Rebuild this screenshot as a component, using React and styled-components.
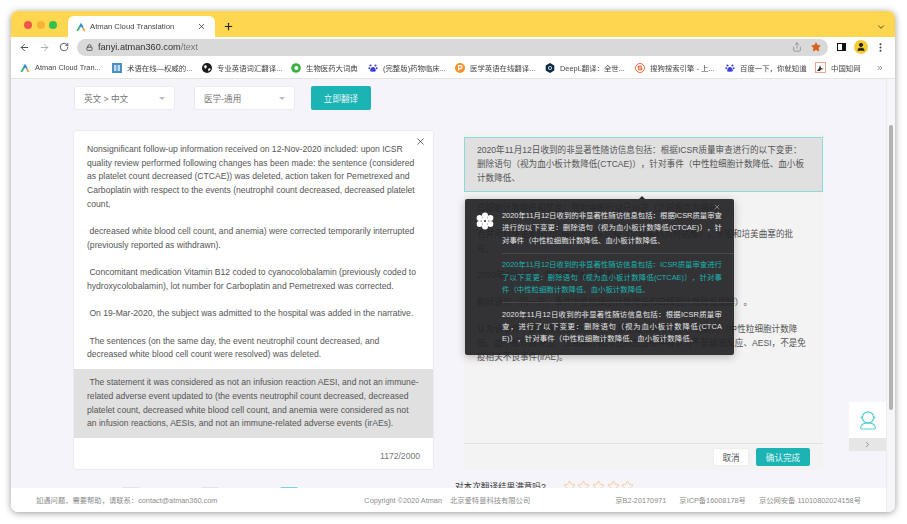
import React from "react";
import styled, { createGlobalStyle } from "styled-components";
import {
  ArrowLeft,
  ArrowRight,
  ChevronDown,
  ChevronRight,
  ChevronsRight,
  Lock,
  MoreVertical,
  Plus,
  RotateCw,
  Share,
  Star,
  User,
  X,
} from "lucide-react";

const sans = `"Liberation Sans", "Noto Sans CJK SC", sans-serif`;
const teal = "#1bb3b3";

const AtmanLogo = ({ size = 10 }) => (
  <svg width={size} height={size} viewBox="0 0 12 12" fill="none" strokeWidth="2.2" strokeLinecap="round">
    <path d="M2 10 L5 5" stroke="#3bb56c" />
    <path d="M5 5 L6 3 L8 6" stroke="#2f8fd8" />
    <path d="M8.6 8 L10 10" stroke="#f0a13a" />
  </svg>
);

const Paw = () => (
  <svg width="10" height="10" viewBox="0 0 12 12" fill="#3d3dd8">
    <circle cx="3" cy="3" r="1.3" />
    <circle cx="9" cy="3" r="1.3" />
    <circle cx="1.6" cy="6.4" r="1.2" />
    <circle cx="10.4" cy="6.4" r="1.2" />
    <path d="M6 4.8c2 0 3.4 2.6 3.4 4.2 0 1.6-2 1.6-3.4 1.2-1.4.4-3.4.4-3.4-1.2 0-1.6 1.4-4.2 3.4-4.2z" />
  </svg>
);

const BookmarkIcon = ({ kind }) => {
  if (kind === "atman") return <AtmanLogo />;
  if (kind === "paw") return <Paw />;
  if (kind === "term")
    return (
      <svg width="10" height="10" viewBox="0 0 10 10">
        <rect width="10" height="10" fill="#4a90c4" />
        <path d="M2 2h2.4v6H2zM5.6 2H8v6H5.6z" fill="#bcdcf0" />
      </svg>
    );
  if (kind === "globe")
    return (
      <svg width="10" height="10" viewBox="0 0 10 10">
        <circle cx="5" cy="5" r="5" fill="#1b1b1b" />
        <path d="M2 3l2-1 1 2-2 2zM6 6l2-1 .6 1.6L6.6 8.6z" fill="#fff" />
      </svg>
    );
  if (kind === "bio")
    return (
      <svg width="10" height="10" viewBox="0 0 10 10">
        <circle cx="5" cy="5" r="4.8" fill="#3cb043" />
        <circle cx="5.4" cy="5" r="2" fill="#fff" />
      </svg>
    );
  if (kind === "p")
    return (
      <svg width="10" height="10" viewBox="0 0 10 10">
        <circle cx="5" cy="5" r="5" fill="#f0932b" />
        <path d="M3.6 7.6V2.6h2a1.5 1.5 0 0 1 0 3H3.6" fill="none" stroke="#fff" strokeWidth="1.1" />
      </svg>
    );
  if (kind === "deepl")
    return (
      <svg width="10" height="10" viewBox="0 0 10 10">
        <path d="M5 0l4.3 2.5v5L5 10 .7 7.5v-5z" fill="#0f2b46" />
        <circle cx="5" cy="5" r="1.6" fill="none" stroke="#fff" strokeWidth=".8" />
      </svg>
    );
  if (kind === "sogou")
    return (
      <svg width="10" height="10" viewBox="0 0 10 10" fill="none" stroke="#ee5a2a">
        <circle cx="5" cy="5" r="4.5" strokeWidth=".9" />
        <path d="M7 3.2H3.4v1.8h3.2v1.8H3" strokeWidth="1.1" />
      </svg>
    );
  return (
    <svg width="11" height="11" viewBox="0 0 11 11">
      <rect x=".5" y=".5" width="10" height="10" fill="#fff" stroke="#e8a48c" />
      <path d="M2 9l2-3 1-3 1 3 3 1-3 .6L5 9z" fill="#333" />
    </svg>
  );
};

const bookmarks = [
  { kind: "atman", label: "Atman Cloud Tran...", width: 92 },
  { kind: "term", label: "术语在线—权威的...", width: 90 },
  { kind: "globe", label: "专业英语词汇翻译...", width: 89 },
  { kind: "bio", label: "生物医药大词典", width: 77 },
  { kind: "paw", label: "(完整版)药物临床...", width: 87 },
  { kind: "p", label: "医学英语在线翻译...", width: 90 },
  { kind: "deepl", label: "DeepL翻译：全世...", width: 90 },
  { kind: "sogou", label: "搜狗搜索引擎 - 上...", width: 90 },
  { kind: "paw", label: "百度一下，你就知道", width: 90 },
  { kind: "cnki", label: "中国知网", width: 60 },
];

const sourceParagraphs = [
  "Nonsignificant follow-up information received on 12-Nov-2020 included: upon ICSR quality review performed following changes has been made: the sentence (considered as platelet count decreased (CTCAE)) was deleted, action taken for Pemetrexed and Carboplatin with respect to the events (neutrophil count decreased, decreased platelet count,",
  " decreased white blood cell count, and anemia) were corrected temporarily interrupted (previously reported as withdrawn).",
  " Concomitant medication Vitamin B12 coded to cyanocolobalamin (previously coded to hydroxycolobalamin), lot number for Carboplatin and Pemetrexed was corrected.",
  " On 19-Mar-2020, the subject was admitted to the hospital was added in the narrative.",
  " The sentences (on the same day, the event neutrophil count decreased, and decreased white blood cell count were resolved) was deleted.",
];

const targetParagraphs = [
  "白细胞计数降低和贫血）暂时中断行动已纠正（之前报告为撤药）。",
  "合并用药维生素B12的编码改为氰钴胺（之前编码为羟钴胺），卡铂和培美曲塞的批号。",
  "2020年3月19日，叙述中增加了患者入院。",
  "删除语句（同一天，事件中性粒细胞计数降低和白细胞计数降低缓解）。",
  "认为该事件不是输液反应AESI，也不是免疫相关不良事件更新为（中性粒细胞计数降低、血小板计数降低、白细胞计数降低和贫血事件被认为不是输液反应、AESI，不是免疫相关不良事件(irAE)。",
];

const suggestions = [
  {
    text: "2020年11月12日收到的非显著性随访信息包括：根据ICSR质量审查进行的以下变更：删除语句（视为血小板计数降低(CTCAE)），针对事件（中性粒细胞计数降低、血小板计数降低、",
  },
  {
    text: "2020年11月12日收到的非显著性随访信息包括：ICSR质量审查进行了以下变更：删除语句（视为血小板计数降低(CTCAE)），针对事件（中性粒细胞计数降低、血小板计数降低、",
    active: true,
  },
  {
    text: "2020年11月12日收到的非显著性随访信息包括：根据ICSR质量审查，进行了以下变更：删除语句（视为血小板计数降低(CTCAE)），针对事件（中性粒细胞计数降低、血小板计数降低、",
    spacing: 0.12,
  },
];

const App = () => {
  return (
    <Page>
      <GlobalStyle />
      <Window>
        <TitleBar>
          <Lights>
            <Light color="#f0544c" />
            <Light color="#f5b433" />
            <Light color="#35c04a" />
          </Lights>
          <Tab>
            <AtmanLogo />
            <TabTitle>Atman Cloud Translation</TabTitle>
            <X size={9} strokeWidth={2} color="#333" />
          </Tab>
          <NewTab>
            <Plus size={11} strokeWidth={2.6} color="#222" />
          </NewTab>
          <TabMenu>
            <ChevronDown size={10} strokeWidth={2} color="#333" />
          </TabMenu>
        </TitleBar>
        <Toolbar>
          <NavIcons>
            <ArrowLeft size={11} strokeWidth={2} color="#444" />
            <ArrowRight size={11} strokeWidth={2} color="#aaa" />
            <RotateCw size={10} strokeWidth={2} color="#444" />
          </NavIcons>
          <Address>
            <Lock size={7} strokeWidth={3} color="#555" />
            <Url>
              fanyi.atman360.com<span>/text</span>
            </Url>
            <AddressActions>
              <Share size={10} strokeWidth={1.5} color="#777" />
              <Star size={10} fill="#d9601a" color="#d9601a" />
            </AddressActions>
          </Address>
          <SidePanelIcon />
          <Avatar>
            <User size={10} fill="#222" color="#222" />
          </Avatar>
          <MoreVertical size={11} strokeWidth={2.4} color="#444" />
        </Toolbar>
        <Bookmarks>
          {bookmarks.map((b) => (
            <Bookmark key={b.label} $width={b.width}>
              <BookmarkIcon kind={b.kind} />
              <span>{b.label}</span>
            </Bookmark>
          ))}
          <MoreBookmarks>
            <ChevronsRight size={8} color="#555" />
          </MoreBookmarks>
        </Bookmarks>
        <Viewport>
          <Main>
            <Content>
              <Controls>
                <Select>
                  英文 &gt; 中文
                  <Caret />
                </Select>
                <Select>
                  医学-通用
                  <Caret />
                </Select>
                <TranslateButton>立即翻译</TranslateButton>
              </Controls>
              <Panels>
                <SourcePanel>
                  <CloseSource>
                    <X size={11} strokeWidth={1.6} color="#333" />
                  </CloseSource>
                  <SourceBody>
                    {sourceParagraphs.map((p) => (
                      <SourceText key={p}>{p}</SourceText>
                    ))}
                    <Highlight>
                      {" "}
                      The statement it was considered as not an infusion reaction AESI, and not an immune-related adverse event updated to (the events neutrophil count decreased, decreased platelet count, decreased white blood cell count, and anemia were considered as not an infusion reactions, AESIs, and not an immune-related adverse events (irAEs).
                    </Highlight>
                  </SourceBody>
                  <Counter>1172/2000</Counter>
                </SourcePanel>
                <TargetPanel>
                  <TargetBody>
                    <ActiveSentence>
                      2020年11月12日收到的非显著性随访信息包括：根据ICSR质量审查进行的以下变更：删除语句（视为血小板计数降低(CTCAE)），针对事件（中性粒细胞计数降低、血小板计数降低、
                    </ActiveSentence>
                    <TargetParagraphs>
                      {targetParagraphs.map((p) => (
                        <TargetText key={p}>{p}</TargetText>
                      ))}
                    </TargetParagraphs>
                  </TargetBody>
                  <TargetActions>
                    <CancelButton>取消</CancelButton>
                    <ConfirmButton>确认完成</ConfirmButton>
                  </TargetActions>
                  <Popover>
                    <PopoverClose>
                      <X size={8} strokeWidth={1.5} color="#ccc" />
                    </PopoverClose>
                    <PopoverIcon>
                      <svg width="18" height="18" viewBox="0 0 18 18" fill="#fff">
                        <circle cx="9" cy="3.4" r="3" />
                        <circle cx="9" cy="14.6" r="3" />
                        <circle cx="3.6" cy="6" r="3" />
                        <circle cx="14.4" cy="6" r="3" />
                        <circle cx="3.6" cy="12" r="3" />
                        <circle cx="14.4" cy="12" r="3" />
                        <circle cx="9" cy="9" r="3.4" />
                        <circle cx="9" cy="9" r="1" fill="#28292c" />
                      </svg>
                    </PopoverIcon>
                    <SuggestionList>
                      {suggestions.map((s) => (
                        <Suggestion key={s.text} $active={s.active} $spacing={s.spacing}>
                          {s.text}
                        </Suggestion>
                      ))}
                    </SuggestionList>
                  </Popover>
                </TargetPanel>
              </Panels>
              <RatingRow>
                <LeftTools>
                  <ToolButton />
                  <ToolButton />
                  <ToolButton $primary />
                </LeftTools>
                <Rating>
                  <RatingLabel>对本次翻译结果满意吗?</RatingLabel>
                  <Stars>
                    {[1, 2, 3, 4, 5].map((n) => (
                      <Star key={n} size={13} strokeWidth={1.2} color="#f3bd6a" />
                    ))}
                  </Stars>
                </Rating>
              </RatingRow>
              <SideWidget>
                <SideWidgetTop>
                  <svg width="18" height="20" viewBox="0 0 18 20" fill="none" stroke="#55cfcf" strokeWidth="1.2">
                    <circle cx="9" cy="7.5" r="5.6" />
                    <path d="M3 19c-1.4 0-1.4-1-1.2-2 .5-2.6 3-4 7.2-4s6.700 1.400 7.200 4c.2 1 .2 2-1.200 2z" />
                    <path d="M1.800 7.500h1.200M15 7.500h1.200" strokeWidth="2.200" />
                  </svg>
                </SideWidgetTop>
                <SideWidgetToggle>
                  <ChevronRight size={9} strokeWidth={1.6} color="#666" />
                </SideWidgetToggle>
              </SideWidget>
            </Content>
            <Footer>
              <span>如遇问题，需要帮助，请联系：contact@atman360.com</span>
              <FooterCopyright>Copyright ©2020 Atman</FooterCopyright>
              <span>北京爱特曼科技有限公司</span>
              <FooterLicence>京B2-20170971</FooterLicence>
              <span>京ICP备16008178号</span>
              <span>京公网安备 11010802024158号</span>
            </Footer>
          </Main>
          <ScrollTrack>
            <ScrollThumb />
          </ScrollTrack>
        </Viewport>
      </Window>
    </Page>
  );
};

const GlobalStyle = createGlobalStyle`
  html, body {
    margin: 0;
    background: #fff;
    overflow: hidden;
  }
`;
const Page = styled.div`
  width: 907px;
  height: 524px;
  padding: 11px;
  box-sizing: border-box;
  font-family: ${sans};
  text-spacing-trim: space-all;
`;
const Window = styled.div`
  width: 884px;
  height: 501px;
  display: flex;
  flex-direction: column;
  border-radius: 7px;
  overflow: hidden;
  box-shadow: 0 1px 7px rgba(0, 0, 0, 0.4);
  filter: blur(0.4px);
`;
const TitleBar = styled.div`
  height: 26px;
  flex: none;
  display: flex;
  align-items: flex-end;
  padding-left: 13px;
  background: #ffd64f;
`;
const Lights = styled.div`
  display: flex;
  gap: 4.5px;
  align-self: flex-start;
  margin-top: 9.5px;
`;
const Light = styled.span`
  width: 8px;
  height: 8px;
  border-radius: 50%;
  background: ${(props) => props.color};
`;
const Tab = styled.div`
  width: 147px;
  height: 21px;
  margin-left: 11px;
  padding: 0 9px 0 8px;
  box-sizing: border-box;
  display: flex;
  align-items: center;
  gap: 4px;
  background: #fff;
  border-radius: 6px 6px 0 0;
`;
const TabTitle = styled.span`
  flex: 1;
  font-size: 7.7px;
  color: #444;
  white-space: nowrap;
`;
const NewTab = styled.div`
  height: 21px;
  margin-left: 8px;
  display: flex;
  align-items: center;
`;
const TabMenu = styled.div`
  height: 21px;
  margin-left: auto;
  margin-right: 9px;
  display: flex;
  align-items: center;
`;
const Toolbar = styled.div`
  height: 20px;
  flex: none;
  display: flex;
  align-items: center;
  padding: 0 9px 0 8px;
  background: #fff;
`;
const NavIcons = styled.div`
  width: 58px;
  display: flex;
  align-items: center;
  gap: 9px;
`;
const Address = styled.div`
  width: 752px;
  height: 17px;
  padding: 0 7px 0 9px;
  box-sizing: border-box;
  display: flex;
  align-items: center;
  gap: 5px;
  background: #d9d9d9;
  border-radius: 9px;
`;
const Url = styled.span`
  font-size: 9.2px;
  color: #333;
  span {
    color: #777;
  }
`;
const AddressActions = styled.div`
  margin-left: auto;
  display: flex;
  align-items: center;
  gap: 9px;
`;
const SidePanelIcon = styled.span`
  width: 9px;
  height: 8px;
  margin-left: 9px;
  box-sizing: border-box;
  border: 1.5px solid #111;
  border-right-width: 4px;
`;
const Avatar = styled.span`
  width: 14px;
  height: 14px;
  margin: 0 7px 0 8px;
  display: flex;
  align-items: center;
  justify-content: center;
  border-radius: 50%;
  background: #f6cc33;
`;
const Bookmarks = styled.div`
  height: 21px;
  flex: none;
  display: flex;
  align-items: center;
  padding-left: 9px;
  background: #fff;
  border-bottom: 1px solid #e4e4e4;
`;
const Bookmark = styled.div`
  width: ${(props) => props.$width}px;
  flex: none;
  display: flex;
  align-items: center;
  gap: 5px;
  font-size: 7.4px;
  color: #444;
  white-space: nowrap;
`;
const MoreBookmarks = styled.div`
  margin-left: auto;
  margin-right: 11px;
  display: flex;
`;
const Viewport = styled.div`
  flex: 1;
  min-height: 0;
  display: flex;
  background: #f4f4fa;
`;
const Main = styled.div`
  flex: 1;
  min-width: 0;
  display: flex;
  flex-direction: column;
`;
const Content = styled.div`
  position: relative;
  flex: 1;
  min-height: 0;
  overflow: hidden;
  padding: 7px 0 0 63px;
`;
const Controls = styled.div`
  display: flex;
  gap: 19px;
`;
const Select = styled.div`
  position: relative;
  width: 101px;
  height: 24px;
  padding-left: 9px;
  box-sizing: border-box;
  display: flex;
  align-items: center;
  background: #fff;
  border: 1px solid #ececf0;
  border-radius: 2px;
  font-size: 8.6px;
  color: #777;
`;
const Caret = styled.span`
  position: absolute;
  right: 9px;
  top: 10px;
  border: 3px solid transparent;
  border-top: 3px solid #bbb;
`;
const TranslateButton = styled.button`
  width: 60px;
  height: 24px;
  margin-left: -3px;
  padding: 0;
  border: none;
  border-radius: 2px;
  background: ${teal};
  color: #e8f8f8;
  font-family: ${sans};
  font-size: 8.6px;
`;
const Panels = styled.div`
  display: flex;
  gap: 31px;
  margin-top: 21px;
`;
const SourcePanel = styled.div`
  position: relative;
  width: 359px;
  height: 338px;
  flex: none;
  display: flex;
  flex-direction: column;
  background: #fff;
  border-radius: 2px;
  box-shadow: 0 0 2px rgba(0, 0, 0, 0.14);
`;
const CloseSource = styled.span`
  position: absolute;
  top: 5px;
  right: 7px;
  display: flex;
`;
const SourceBody = styled.div`
  flex: 1;
  padding-top: 12px;
  font-size: 8.6px;
  line-height: 13.7px;
  color: #555;
`;
const SourceText = styled.p`
  margin: 0 13px 13.7px;
  white-space: pre-wrap;
`;
const Highlight = styled.p`
  margin: -6.7px 0 0;
  padding: 7px 13px;
  background: #e0e0e0;
  white-space: pre-wrap;
`;
const Counter = styled.div`
  height: 31px;
  padding-right: 13px;
  text-align: right;
  font-size: 8.6px;
  line-height: 37px;
  color: #777;
`;
const TargetPanel = styled.div`
  position: relative;
  width: 359px;
  height: 339px;
  flex: none;
  display: flex;
  flex-direction: column;
  background: #f3f3f4;
`;
const TargetBody = styled.div`
  flex: 1;
  min-height: 0;
  overflow: hidden;
  padding-top: 6px;
  font-size: 8.6px;
  line-height: 14.2px;
  color: #555;
`;
const ActiveSentence = styled.div`
  padding: 5px 12px;
  background: #e0e0e0;
  border: 1px solid #8fd9d8;
`;
const TargetParagraphs = styled.div`
  padding: 9px 13px 0;
`;
const TargetText = styled.p`
  margin: 0 0 12.5px;
`;
const TargetActions = styled.div`
  height: 26px;
  flex: none;
  display: flex;
  align-items: center;
  justify-content: flex-end;
  gap: 7px;
  padding-right: 13px;
  border-top: 1px solid #e3e3e3;
`;
const CancelButton = styled.button`
  width: 36px;
  height: 18px;
  padding: 0;
  border: 1px solid #eee;
  border-radius: 2px;
  background: #fff;
  color: #555;
  font-family: ${sans};
  font-size: 8.6px;
`;
const ConfirmButton = styled(CancelButton)`
  width: 54px;
  border: none;
  background: ${teal};
  color: #e8f8f8;
`;
const Popover = styled.div`
  position: absolute;
  left: 1px;
  top: 68px;
  width: 269px;
  height: 156px;
  box-sizing: border-box;
  padding: 11px 0 0 37px;
  background: rgba(35, 36, 39, 0.93);
  border-radius: 2px;
  box-shadow: 0 2px 8px rgba(0, 0, 0, 0.25);
  &::before {
    content: "";
    position: absolute;
    left: 174px;
    top: -6px;
    border: 3px solid transparent;
    border-bottom: 3px solid #28292c;
  }
`;
const PopoverClose = styled.span`
  position: absolute;
  top: 4px;
  right: 13px;
  display: flex;
`;
const PopoverIcon = styled.span`
  position: absolute;
  left: 11px;
  top: 13px;
  display: flex;
`;
const SuggestionList = styled.div`
  display: flex;
  flex-direction: column;
`;
const Suggestion = styled.div`
  padding: 0 12px 6px 0;
  margin-bottom: 5.5px;
  border-bottom: 1px solid #48494c;
  font-size: 7.4px;
  line-height: 12.3px;
  letter-spacing: ${(props) => props.$spacing || 0}px;
  text-align: justify;
  word-break: break-all;
  color: ${(props) => (props.$active ? "#19b4b0" : "#e6e6e6")};
  &:last-child {
    border-bottom: none;
  }
`;
const RatingRow = styled.div`
  display: flex;
  margin-top: 9px;
`;
const LeftTools = styled.div`
  width: 381px;
  flex: none;
  box-sizing: border-box;
  padding: 8px 0 0 48px;
  display: flex;
  gap: 61px;
`;
const ToolButton = styled.span`
  width: 18px;
  height: 24px;
  border-radius: 2px;
  background: ${(props) => (props.$primary ? "#7fd2d2" : "#e4e4e6")};
`;
const Rating = styled.div`
  display: flex;
  align-items: center;
  height: 14px;
  gap: 17px;
`;
const RatingLabel = styled.span`
  font-size: 8.6px;
  color: #333;
`;
const Stars = styled.div`
  display: flex;
  gap: 1.6px;
`;
const SideWidget = styled.div`
  position: absolute;
  right: 0;
  top: 323px;
  width: 37px;
  display: flex;
  flex-direction: column;
`;
const SideWidgetTop = styled.div`
  height: 36px;
  display: flex;
  align-items: center;
  justify-content: center;
  background: #fff;
`;
const SideWidgetToggle = styled.div`
  height: 13px;
  display: flex;
  align-items: center;
  justify-content: center;
  background: #e6e6e6;
`;
const Footer = styled.div`
  height: 24px;
  flex: none;
  display: flex;
  align-items: center;
  padding-left: 25px;
  gap: 13px;
  background: #fff;
  font-size: 7.3px;
  color: #8c8c8c;
  white-space: nowrap;
`;
const FooterCopyright = styled.span`
  margin: 0 -5px 0 134px;
`;
const FooterLicence = styled.span`
  margin-left: 72px;
`;
const ScrollTrack = styled.div`
  width: 9px;
  flex: none;
  box-sizing: border-box;
  padding: 46px 2px 0 2px;
  background: #f6f6f8;
  border-left: 1px solid #ececee;
`;
const ScrollThumb = styled.div`
  height: 285px;
  border-radius: 3px;
  background: #b2b2b2;
`;

export default App;
